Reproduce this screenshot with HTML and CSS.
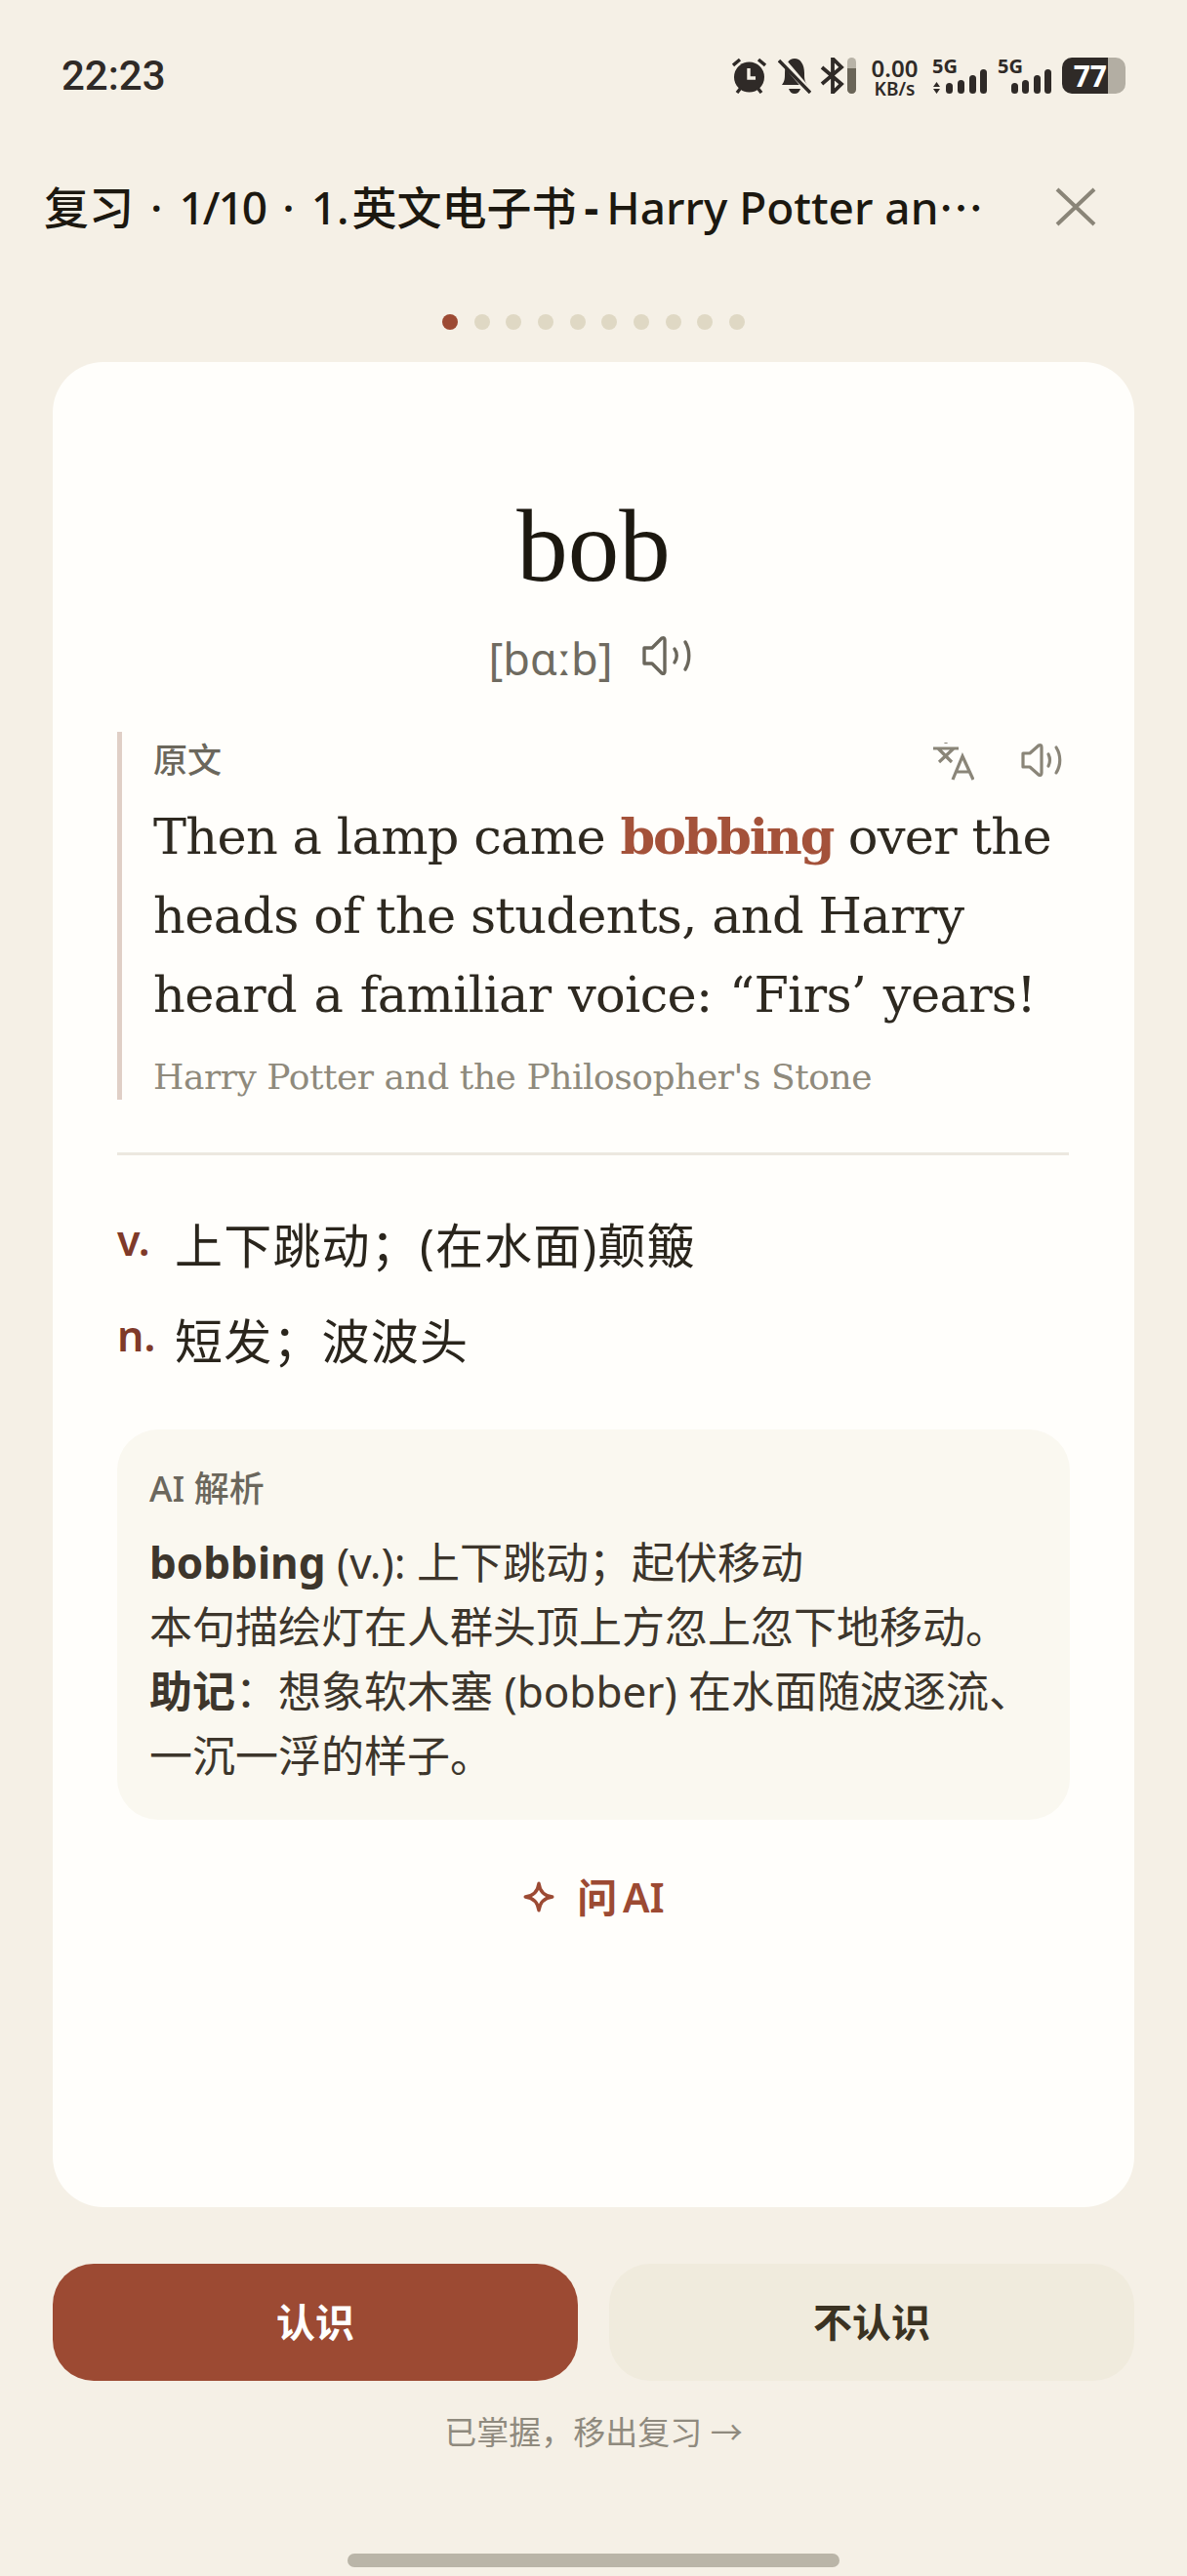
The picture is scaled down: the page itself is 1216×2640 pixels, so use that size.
FILE: index.html
```html
<!DOCTYPE html>
<html lang="zh-CN">
<head>
<meta charset="utf-8">
<title>复习</title>
<link rel="stylesheet" href="styles.css">
</head>
<body>
<div class="page">
  <div class="status">
    <span class="time">22:23</span>
    <div class="sys">
      <svg class="i-alarm" viewBox="0 0 35 37"><circle cx="17.500" cy="20" r="15.500" fill="#2f2a27"/><path d="M17 11v10h7" fill="none" stroke="#f5f0e6" stroke-width="3.400"/><path d="M1 8 8 2M34 8 27 2M5 36l4-5M30 36l-4-5" stroke="#2f2a27" stroke-width="3.400" fill="none"/></svg>
      <svg class="i-bell" viewBox="0 0 34 37"><path d="M4 28c3-4 3-7 3-12C7 7 11 1 17 1s10 6 10 15c0 5 0 8 3 12z" fill="#2f2a27"/><path d="M11 32h12c-1 3-3 5-6 5s-5-2-6-5z" fill="#2f2a27"/><path d="M3 1 32 35" stroke="#f5f0e6" stroke-width="6.500"/><path d="M1 3 33 36" stroke="#2f2a27" stroke-width="3.400"/></svg>
      <svg class="i-bt" viewBox="0 0 37 37"><path d="M2 10 22 27 13 36V1l9 9L2 27" fill="none" stroke="#2f2a27" stroke-width="3.800"/><rect x="28" width="9" height="37" rx="4.500" fill="#b8b3a7"/><path d="M28 11h9v21.500a4.500 4.500 0 0 1-9 0z" fill="#6a6558"/></svg>
      <div class="speed"><span class="speed-n">0.00</span><span class="speed-u">KB/s</span></div>
      <div class="sig">
        <span class="g5">5G</span>
        <svg class="i-sig1" viewBox="0 0 56 25"><path d="M1 18l3.500-5L8 18zM1 20h7l-3.500 5z" fill="#2f2a27"/><rect x="14" y="14" width="7" height="11" rx="3.500" fill="#2f2a27"/><rect x="26" y="11" width="7" height="14" rx="3.500" fill="#2f2a27"/><rect x="38" y="6" width="7" height="19" rx="3.500" fill="#2f2a27"/><rect x="49" width="7" height="25" rx="3.500" fill="#2f2a27"/></svg>
      </div>
      <div class="sig sig2">
        <span class="g5">5G</span>
        <svg class="i-sig2" viewBox="0 0 41 25"><rect y="14" width="7" height="11" rx="3.500" fill="#2f2a27"/><rect x="11" y="11" width="7" height="14" rx="3.500" fill="#2f2a27"/><rect x="23" y="6" width="7" height="19" rx="3.500" fill="#2f2a27"/><rect x="34" width="7" height="25" rx="3.500" fill="#2f2a27"/></svg>
      </div>
      <div class="batt"><span class="batt-fill">77</span><span class="batt-rest"></span></div>
    </div>
  </div>

  <div class="topbar">
    <h1 class="title">复习<span class="sep">·</span><span class="num">1/10</span><span class="sep">·</span><span class="lead">1.</span>英文电子书<span class="hy">-</span>Harry Potter an⋯</h1>
    <svg class="i-close" viewBox="0 0 42 40"><path d="M2 2 40 38M40 2 2 38" stroke="#8a8578" stroke-width="4" fill="none"/></svg>
  </div>

  <div class="dots">
    <span class="dot on"></span><span class="dot"></span><span class="dot"></span><span class="dot"></span><span class="dot"></span><span class="dot"></span><span class="dot"></span><span class="dot"></span><span class="dot"></span><span class="dot"></span>
  </div>

  <main class="card">
    <h2 class="word">bob</h2>
    <div class="phon">
      <span class="ipa">[bɑːb]</span>
      <svg class="i-sound" viewBox="0 0 50 42"><path d="M2 13h8L20 3c2-1 3 0 3 2v32c0 2-1 3-3 2L10 29H2z" fill="none" stroke="#6b675c" stroke-width="3.400" stroke-linejoin="round"/><path d="M33 14c3 4 3 10 0 14M44 7c5 8 5 20 0 28" fill="none" stroke="#6b675c" stroke-width="3.400" stroke-linecap="round"/></svg>
    </div>

    <section class="quote">
      <div class="quote-head">
        <span class="quote-label">原文</span>
        <svg class="i-trans" viewBox="0 0 42 42"><path d="M0 9h26M13 3v1M5 9l14 14M21 9 6 23" fill="none" stroke="#8a8578" stroke-width="3.200"/><path d="M20 41 30 17 41 41M24 33h13" fill="none" stroke="#8a8578" stroke-width="3.200"/></svg>
        <svg class="i-sound2" viewBox="0 0 43 36"><path d="M2 11h7L18 3c2-1 3 0 3 2v26c0 2-1 3-3 2L9 25H2z" fill="none" stroke="#8a8578" stroke-width="3.200" stroke-linejoin="round"/><path d="M28 12c2 4 2 8 0 12M36 5c5 8 5 18 0 26" fill="none" stroke="#8a8578" stroke-width="3.200" stroke-linecap="round"/></svg>
      </div>
      <p class="sentence">Then a lamp came <b class="hl">bobbing</b> over the heads of the students, and Harry <span class="wide">heard a familiar voice: “Firs’ years!</span></p>
      <p class="source">Harry Potter and the Philosopher's Stone</p>
    </section>

    <hr class="rule">

    <div class="defs">
      <div class="def"><span class="pos">v.</span><span class="mean">上下跳动；(在水面)颠簸</span></div>
      <div class="def"><span class="pos">n.</span><span class="mean">短发；波波头</span></div>
    </div>

    <section class="ai">
      <div class="ai-label">AI 解析</div>
      <p class="ai-body"><b>bobbing</b> (v.): 上下跳动；起伏移动<br>本句描绘灯在人群头顶上方忽上忽下地移动。<br><b>助记</b>：想象软木塞 (bobber) 在水面随波逐流、一沉一浮的样子。</p>
    </section>

    <div class="ask">
      <svg class="i-star" viewBox="0 0 32 32"><path d="M16 3c1 8 5 12 13 13-8 1-12 5-13 13-1-8-5-12-13-13 8-1 12-5 13-13z" fill="none" stroke="#9c4a33" stroke-width="3.200" stroke-linejoin="round"/></svg>
      <span class="ask-text">问 AI</span>
    </div>
  </main>

  <div class="actions">
    <button class="btn know">认识</button>
    <button class="btn unknown">不认识</button>
  </div>
  <div class="remove">已掌握，移出复习 →</div>
  <div class="homebar"></div>
</div>
</body>
</html>
```
FILE: styles.css
```css
* { box-sizing: border-box; }
html, body { margin: 0; padding: 0; }
body {
  background: #f5f0e6;
  font-family: "Noto Sans", "Noto Sans CJK SC", sans-serif;
  color: #1f1b14;
}
.page { width: 1216px; height: 2640px; display: flex; flex-direction: column; overflow: hidden; }

.status { height: 172px; padding: 58px 63px 0 63px; display: flex; justify-content: space-between; align-items: flex-start; }
.time { font-size: 42px; line-height: 40px; font-weight: 500; color: #2f2a27; font-family: Roboto, "Noto Sans", sans-serif; }
.sys { display: flex; align-items: flex-start; margin-top: 1px; }
.sys svg { display: block; flex: none; }
.i-alarm { width: 35px; height: 37px; }
.i-bell { width: 34px; height: 37px; margin-left: 12px; }
.i-bt { width: 37px; height: 37px; margin-left: 9px; }
.speed { margin-left: 16px; width: 47px; display: flex; flex-direction: column; align-items: center; color: #2f2a27; font-weight: 600; font-family: "Noto Sans", sans-serif; }
.speed-n { font-size: 24px; line-height: 22px; }
.speed-u { font-size: 19px; line-height: 20px; }
.sig { position: relative; width: 56px; height: 37px; margin-left: 15px; }
.sig2 { width: 55px; margin-left: 11px; }
.g5 { display: block; font-size: 20px; line-height: 18px; font-weight: 700; color: #2f2a27; }
.i-sig1 { position: absolute; left: 0; top: 12px; width: 56px; height: 25px; }
.i-sig2 { position: absolute; left: 14px; top: 12px; width: 41px; height: 25px; }
.batt { display: flex; width: 65px; height: 37px; margin-left: 11px; }
.batt-fill { width: 47px; background: #2f2a27; color: #fff; border-radius: 10px 0 0 10px; font-size: 30px; line-height: 37px; font-weight: 700; text-align: right; padding-right: 1px; font-family: "Noto Sans", sans-serif; }
.batt-rest { width: 18px; background: #b3aea3; border-radius: 0 10px 10px 0; }

.topbar { height: 80px; padding: 0 93px 0 45px; display: flex; align-items: center; justify-content: space-between; }
.title { margin: 0; font-size: 46px; line-height: 60px; font-weight: 500; white-space: nowrap; color: #1c1810; }
.sep { margin: 0 17px; }
.num { letter-spacing: -2px; }
.lead { margin-right: 3px; }
.hy { margin: 0 8px; font-weight: 700; }
.i-close { width: 42px; height: 40px; flex: none; }

.dots { margin-top: 70px; height: 16px; display: flex; justify-content: center; gap: 16.700px; }
.dot { width: 16px; height: 16px; border-radius: 50%; background: #dfd8c4; }
.dot.on { background: #9c4a33; }

.card { margin: 33px 54px 0; height: 1891px; background: #fffefb; border-radius: 52px; padding: 0 66px; display: flex; flex-direction: column; }
.word { margin: 145px 0 0; text-align: center; font-family: "Liberation Serif", serif; font-weight: 400; font-size: 105px; line-height: 88px; color: #1c1810; }
.phon { margin-top: 41px; height: 60px; padding-right: 8px; display: flex; justify-content: center; align-items: center; gap: 30px; }
.ipa { font-family: "Noto Sans", sans-serif; font-size: 45px; font-weight: 400; line-height: 60px; color: #6f6b60; }
.i-sound { width: 50px; height: 42px; margin-bottom: 6px; }

.quote { margin-top: 45px; height: 377px; border-left: 5px solid #e0cfc6; padding: 9px 0 0 32px; flex: none; }
.quote-head { display: flex; align-items: center; height: 40px; }
.quote-label { font-size: 35px; line-height: 40px; font-weight: 500; color: #6b675c; margin-right: auto; }
.i-trans { width: 42px; height: 42px; }
.i-sound2 { width: 43px; height: 36px; margin-left: 48px; margin-right: 7px; }
.sentence { margin: 18px 0 0; font-family: "DejaVu Serif", serif; font-size: 51px; line-height: 81px; color: #2e2920; letter-spacing: -0.700px; }
.hl { color: #a4523a; font-weight: 700; letter-spacing: -2.200px; }
.wide { word-spacing: 2px; }
.source { margin: 19px 0 0; font-family: "DejaVu Serif", serif; font-size: 36px; line-height: 50px; color: #8f8a7c; white-space: nowrap; letter-spacing: -0.450px; }

.rule { margin: 54px 0 0; border: 0; height: 3px; background: #ece8df; flex: none; width: 975px; }

.defs { margin-top: 59px; display: flex; flex-direction: column; gap: 32px; }
.def { display: flex; align-items: flex-start; height: 66px; }
.pos { width: 59px; font-size: 43px; line-height: 56px; font-weight: 600; color: #7f3a29; }
.mean { font-size: 49px; line-height: 66px; color: #2a251c; letter-spacing: 1.200px; }

.ai { margin-top: 58px; height: 400px; background: #faf8f0; border-radius: 42px; padding: 39px 33px 0; flex: none; }
.ai-label { font-size: 36px; line-height: 44px; font-weight: 500; color: #6b675c; }
.ai-body { margin: 20px 0 0; font-size: 44px; line-height: 66px; color: #3d362c; }
.ai-body b { font-weight: 700; }

.ask { margin-top: 54px; display: flex; justify-content: center; align-items: center; gap: 22px; font-size: 41px; line-height: 50px; font-weight: 600; color: #9c4a33; }
.ask-text { word-spacing: -5px; }
.i-star { width: 34px; height: 34px; }

.actions { margin: 58px 54px 0; display: flex; gap: 32px; }
.btn { flex: 1; height: 120px; border: 0; border-radius: 42px; font-family: inherit; font-size: 40px; font-weight: 700; padding: 0 0 5px; }
.know { background: #9c4a33; color: #fff; }
.unknown { background: #f0ebdd; color: #3b3323; }

.remove { margin-top: 30px; text-align: center; font-size: 33px; line-height: 46px; color: #8f8a7e; }
.homebar { margin: 101px auto 0; width: 504px; height: 14px; border-radius: 7px; background: #bab5a8; flex: none; }
```
